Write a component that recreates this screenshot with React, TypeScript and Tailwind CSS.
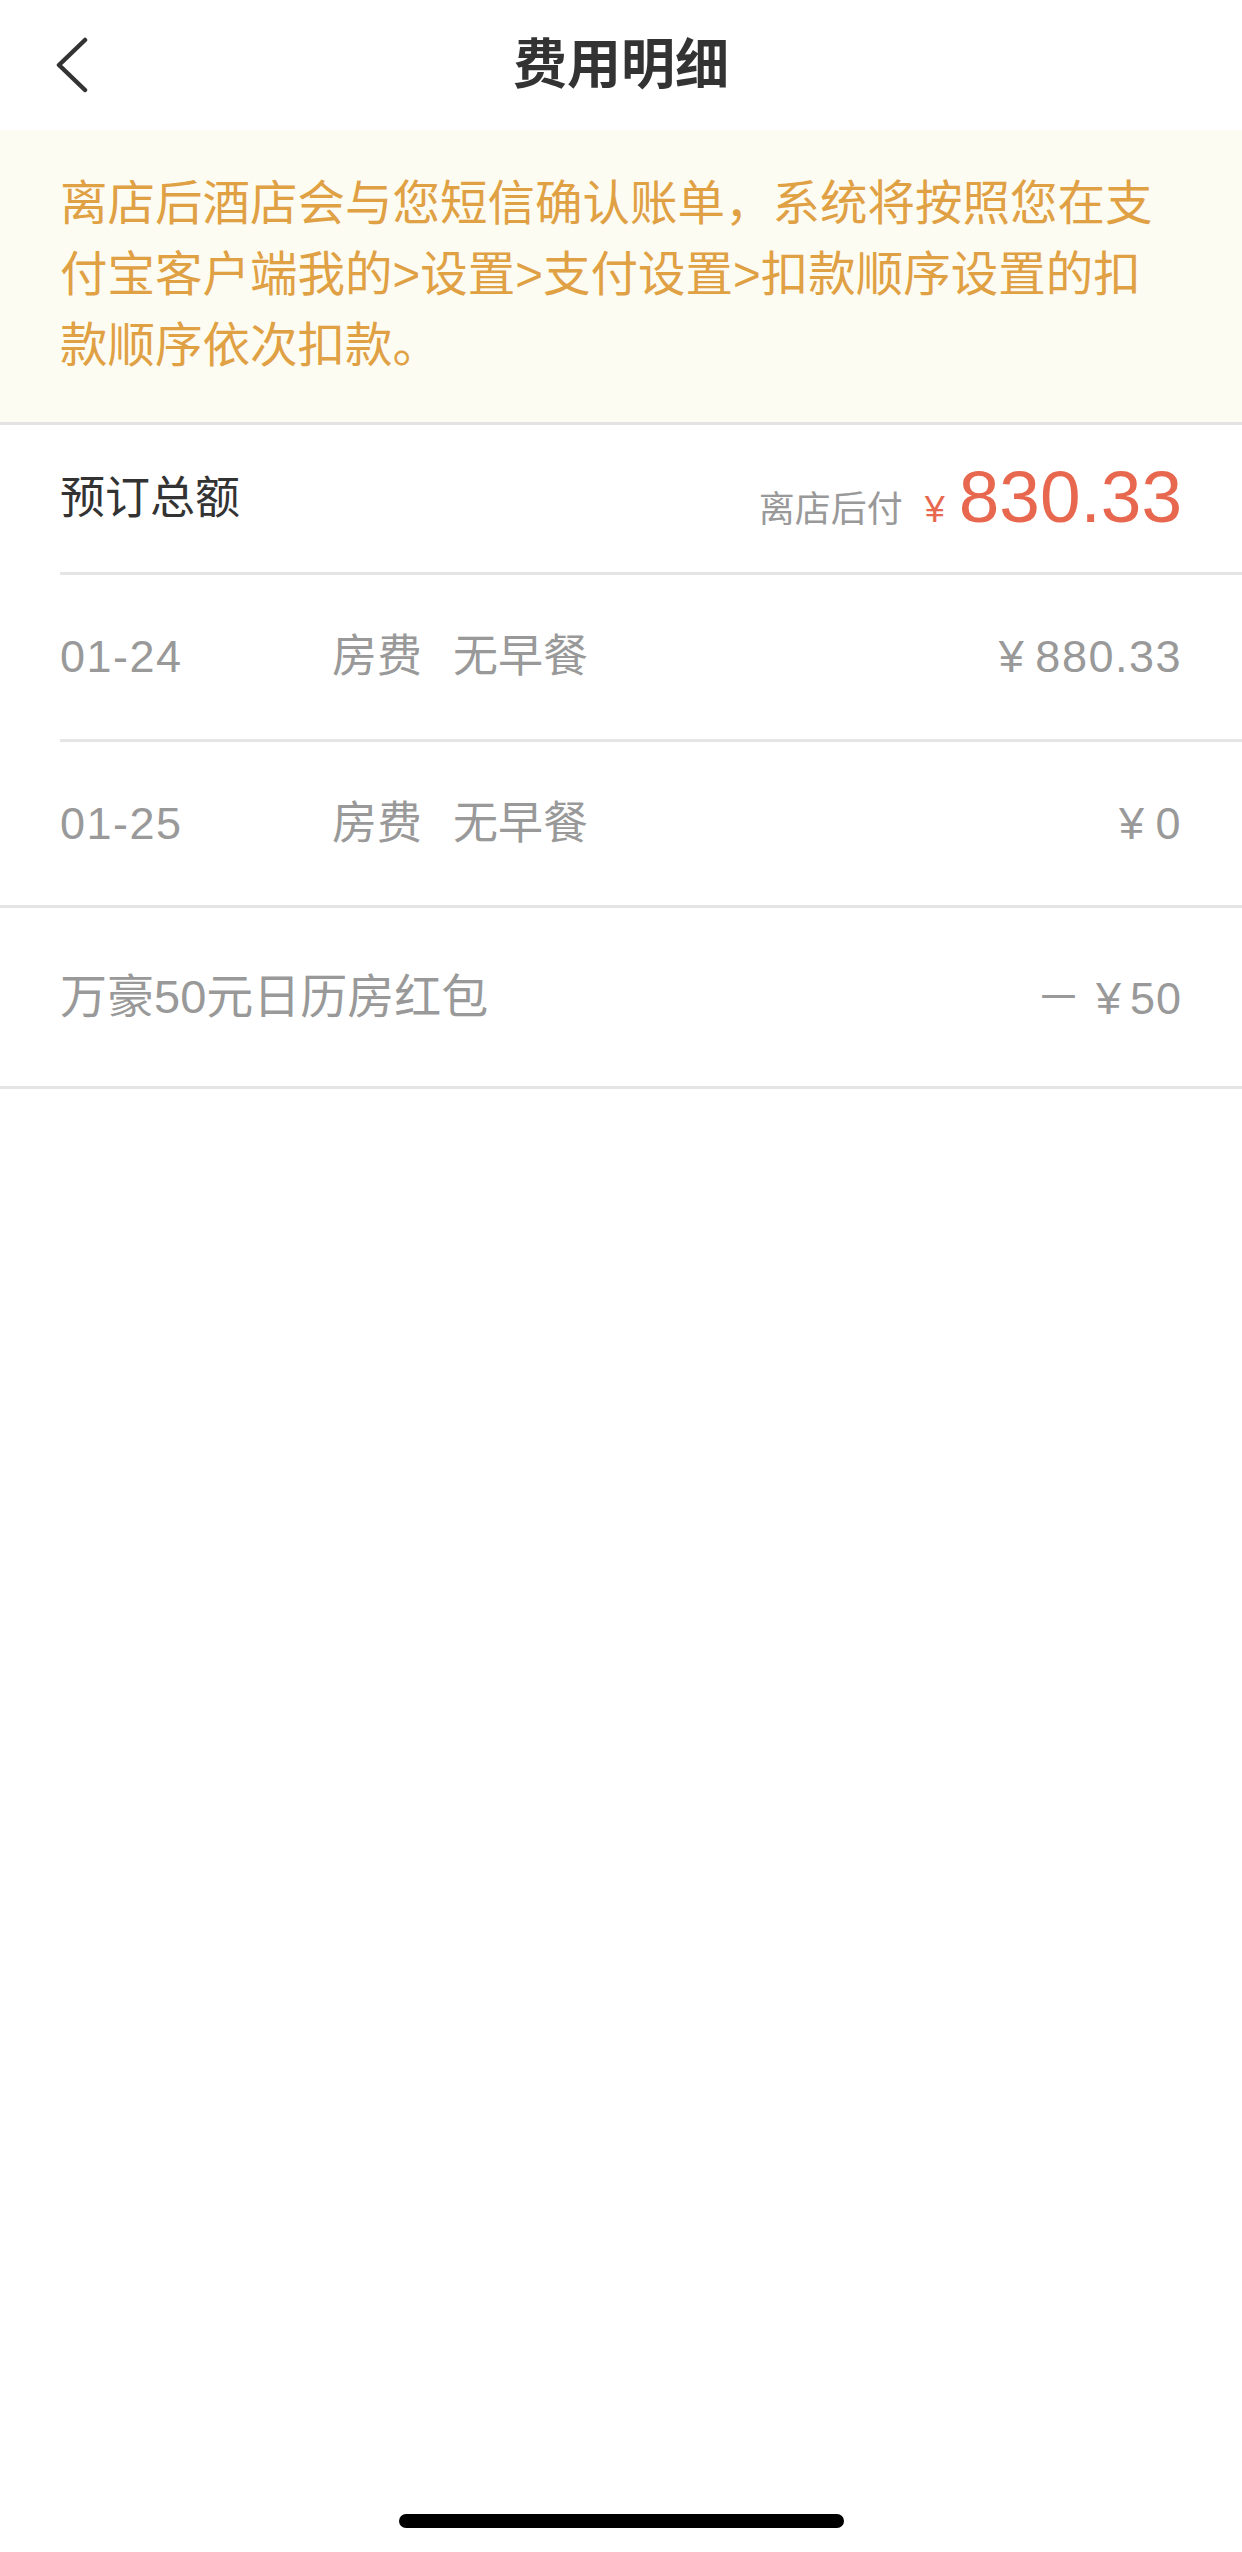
import { ReactNode } from "react"

const font = "font-['Liberation_Sans','Noto_Sans_CJK_SC',sans-serif]"

const nights = [
  { date: "01-24", type: "房费", meal: "无早餐", amount: "880.33" },
  { date: "01-25", type: "房费", meal: "无早餐", amount: "0" },
]

function Row({ inset, height, children }: { inset?: boolean; height: string; children: ReactNode }) {
  // inset rows draw their divider from the text edge, the others span the full width
  if (inset) {
    return (
      <div className="pl-[60px]">
        <div className={`flex items-center justify-between pr-[60px] border-b-[3px] border-[#e5e5e5] ${height}`}>
          {children}
        </div>
      </div>
    )
  }
  return (
    <div className={`flex items-center justify-between px-[60px] border-b-[3px] border-[#e5e5e5] ${height}`}>
      {children}
    </div>
  )
}

export default function App() {
  return (
    <div className={`min-h-[2552px] w-[1242px] bg-white flex flex-col ${font}`}>
      <header className="h-[130px] grid grid-cols-[1fr_auto_1fr] items-center">
        <button className="pl-[56px] justify-self-start">
          <svg width="32" height="56" viewBox="0 0 32 56" fill="none">
            <polyline points="29,3 3,28 29,53" stroke="#333333" strokeWidth="4.5" strokeLinecap="round" strokeLinejoin="round" />
          </svg>
        </button>
        <h1 className="text-[54px] font-bold text-[#333333] leading-none">费用明细</h1>
        <div />
      </header>

      <div className="bg-[#fdfcf2] border-b-[3px] border-[#e3e3e3] px-[60px] pt-[38px] pb-[41px]">
        <p className="text-[47.5px] leading-[71px] text-[#e0a044]">
          离店后酒店会与您短信确认账单，系统将按照您在支
          <br />
          付宝客户端我的&gt;设置&gt;支付设置&gt;扣款顺序设置的扣
          <br />
          款顺序依次扣款。
        </p>
      </div>

      <Row inset height="h-[150px]">
        <span className="text-[45px] text-[#333333]">预订总额</span>
        <div className="flex items-baseline">
          <span className="text-[36px] text-[#999999]">离店后付</span>
          <span className="ml-[22px] mr-[14px] text-[36px] text-[#e8684f]">¥</span>
          <span className="text-[73px] leading-none text-[#e8684f]">830.33</span>
        </div>
      </Row>

      {nights.map((n, i) => (
        <Row key={n.date} inset={i === 0} height={i === 0 ? "h-[167px]" : "h-[166px]"}>
          <div className="flex items-center text-[45px] text-[#999999]">
            <span className="w-[272px] tracking-[1.5px]">{n.date}</span>
            <span>{n.type}</span>
            <span className="ml-[31px]">{n.meal}</span>
          </div>
          <span className="text-[45px] text-[#999999] tracking-[1.5px]">
            <span className="mr-[10px]">¥</span>
            {n.amount}
          </span>
        </Row>
      ))}

      <Row height="h-[181px]">
        <span className="text-[47px] text-[#999999]">万豪50元日历房红包</span>
        <span className="text-[45px] text-[#999999] tracking-[1px]">
          <span className="font-['Noto_Sans_CJK_SC',sans-serif]">－</span>
          <span className="ml-[14px] mr-[8px]">¥</span>
          50
        </span>
      </Row>

      <div className="mt-auto flex justify-center pb-[24px]">
        <div className="w-[445px] h-[14px] rounded-full bg-black" />
      </div>
    </div>
  )
}
